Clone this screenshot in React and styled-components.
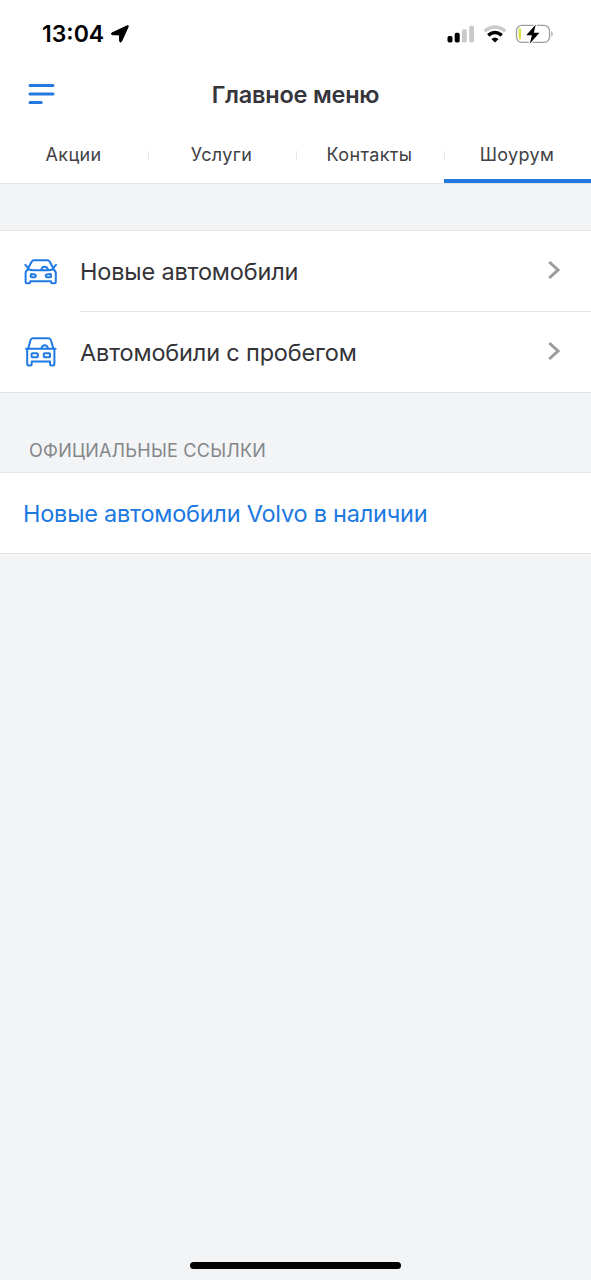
import React from "react";
import styled, { createGlobalStyle } from "styled-components";

const Global = createGlobalStyle`
  * { box-sizing: border-box; }
  body { margin: 0; background: #f2f4f6; font-family: Inter, "Liberation Sans", sans-serif; }
`;
const Screen = styled.div`
  display: flex; flex-direction: column; height: 1280px; width: 100%;
  background: #f2f4f6; color: #333338; overflow: hidden;
`;
const StatusBar = styled.header`
  display: flex; align-items: center; height: 68px; padding: 0 36px 0 42px; background: #fff;
`;
const Clock = styled.time`
  font-size: 23px; font-weight: 600; color: #000;
`;
const StatusIcons = styled.div`
  display: flex; align-items: center; margin-left: auto; height: 24px;
`;
const Drawing = styled.svg`
  display: block; flex: none; margin: ${(p) => p.$m || 0};
`;
const NavBar = styled.div`
  display: grid; grid-template-columns: 100px 1fr 100px; align-items: center;
  height: 58px; padding-bottom: 6px; background: #fff;
`;
const MenuButton = styled.button`
  border: 0; background: none; padding: 0 0 0 28px; justify-self: start;
`;
const Title = styled.h1`
  margin: 0; padding-top: 1px; text-align: center; font-size: 23.5px; line-height: 30px; font-weight: 600;
  letter-spacing: -0.22px; color: #35353b; white-space: nowrap;
`;
const Tabs = styled.nav`
  display: grid; grid-template-columns: repeat(3, 148px) 1fr; height: 58px; background: #fff;
  border-bottom: 1px solid #e2e4e6;
`;
const Tab = styled.a`
  display: flex; align-items: center; justify-content: center; position: relative;
  font-size: 18px; letter-spacing: 0.35px; padding: 3px 1px 0 0; color: #414144;
  border-bottom: 4px solid ${(p) => (p.$active ? "#2379df" : "transparent")};
  &:not(:last-child)::after {
    content: ""; position: absolute; right: -1px; top: 25px; width: 1px; height: 9px; background: #e6e8ea;
  }
`;
const List = styled.section`
  background: #fff; border-top: 1px solid #e4e6e8; border-bottom: 1px solid #e1e3e5;
  margin-top: ${(p) => p.$gap || "0"};
`;
const Row = styled.a`
  display: flex; align-items: stretch; height: ${(p) => p.$h};
`;
const RowIcon = styled.div`
  width: 80px; padding-left: 22px; display: flex; align-items: center;
`;
const RowBody = styled.div`
  flex: 1; display: flex; align-items: center; justify-content: space-between;
  padding: 1px 30px 0 0; font-size: 23.5px; letter-spacing: -0.17px;
  border-bottom: ${(p) => (p.$line ? "1px solid #e5e5e7" : "0")};
`;
const SectionLabel = styled.h2`
  margin: 0; height: 79px; padding: 47px 29px 0; font-size: 18px; line-height: 22px;
  font-weight: 400; letter-spacing: 0.24px; color: #85868a;
`;
const Link = styled.a`
  display: flex; align-items: center; height: 80px; padding: 1px 23px 0; color: #1b79df;
  font-size: 23.5px; letter-spacing: -0.23px;
`;
const Bottom = styled.footer`
  display: flex; justify-content: center; margin-top: auto; padding-bottom: 11px;
`;
const HomeIndicator = styled.div`
  width: 211px; height: 7px; border-radius: 4px; background: #000;
`;

const LocationArrow = () => (
  <Drawing width="20" height="20" viewBox="0 0 20 20" $m="0 0 0 6px">
    <path d="M1.8 9 17.2 1.8Q18.8 1.2 18.1 2.9L11.6 17.3Q10.2 19.2 9.7 17.1L9.4 10.9 2.4 10.7Q.4 10 1.8 9Z" fill="#000" stroke="#000" strokeWidth="1" strokeLinejoin="round" />
  </Drawing>
);
const Signal = () => (
  <Drawing width="28" height="20" viewBox="0 0 28 20">
    <rect x="0.5" y="12" width="5" height="6.5" rx="1.7" fill="#000" />
    <rect x="7.7" y="8.7" width="5" height="9.8" rx="1.7" fill="#000" />
    <rect x="15" y="5.3" width="4.8" height="13.2" rx="1.7" fill="#c9c9cb" />
    <rect x="22.2" y="1.8" width="4.8" height="16.7" rx="1.7" fill="#c9c9cb" />
  </Drawing>
);
const Wifi = () => (
  <Drawing width="24" height="20" viewBox="0 0 24 20" $m="0 0 0 8px">
    <path d="M1.7 7.2Q12 -1.2 22.3 7.2" fill="none" stroke="#c9c9cb" strokeWidth="3.3" />
    <path d="M5.3 11.4Q12 5.6 18.7 11.4" fill="none" stroke="#000" strokeWidth="3.6" />
    <path d="M8.4 15Q12 12 15.6 15L12 18.6Z" fill="#000" />
  </Drawing>
);
const Battery = () => (
  <Drawing width="40" height="22" viewBox="0 0 40 22" $m="0 0 0 8px">
    <rect x="1.5" y="2.4" width="33" height="17" rx="5.3" fill="#fff" stroke="#9d9d9f" strokeWidth="1.3" />
    <rect x="3.6" y="5.2" width="2.4" height="11.4" rx="1.1" fill="#dce344" />
    <path d="M36.4 8.3Q39 11 36.4 13.9Z" fill="#9d9d9f" />
    <path d="M20.8 1.6 11.2 12.2H16.9L14.8 20.7 24.4 9.7H18.8Z" fill="#000" stroke="#fff" strokeWidth="2.4" paintOrder="stroke" />
  </Drawing>
);
const MenuIcon = () => (
  <Drawing width="28" height="24" viewBox="0 0 28 24">
    <path d="M2 3.4H25M2 12H25M2 20.4H13.2" stroke="#2379df" strokeWidth="3" strokeLinecap="round" />
  </Drawing>
);
const blue = { fill: "none", stroke: "#1f7ae4", strokeWidth: 2, strokeLinecap: "round", strokeLinejoin: "round" };
const NewCar = () => (
  <Drawing width="38" height="32" viewBox="0 0 38 32" {...blue}>
    <path d="M5.8 12.8 9.8 5.6Q10.5 4.2 12 4.2H25.4Q26.9 4.2 27.6 5.6L31.6 12.8" />
    <path d="M3.4 8.8 6.6 12.6 4.2 15.2Q3.6 16 3.6 17.4V26Q3.6 27.3 4.9 27.3H7Q8.3 27.3 8.3 26V25.2H29V26Q29 27.3 30.3 27.3H32.5Q33.8 27.3 33.8 26V17.4Q33.8 16 33.2 15.2L30.8 12.6 34 8.8" />
    <path d="M6.4 13.4Q8.5 14.3 12 14.3H25.4Q28.9 14.3 31 13.4M19.2 14Q20 10.8 22.7 10.8T26 14" />
    <path d="M9.2 17.9 13 18.5Q14 18.8 13.9 20T12.8 21.2H9.8Q8.6 21.2 8.6 20ZM28.6 17.9 24.6 18.5Q23.6 18.8 23.7 20T24.8 21.2H28Q29.2 21.2 29.2 20Z" />
  </Drawing>
);
const UsedCar = () => (
  <Drawing width="38" height="36" viewBox="0 0 38 36" {...blue}>
    <path d="M6.2 14.6 8.5 6.2Q9 4.3 11 4.3H26.4Q28.4 4.3 28.9 6.2L31.4 14.6M4 14.8H33.6" />
    <path d="M5.2 15.5V29.9Q5.2 31.4 6.6 31.4H8.3Q9.7 31.4 9.7 29.9V27.4H28V29.9Q28 31.4 29.4 31.4H31Q32.4 31.4 32.4 29.9V15.5" />
    <path d="M19.4 14.4Q20.2 11.3 22.7 11.3T26 14.4" />
    <rect x="9.6" y="19.2" width="6.2" height="4" rx="0.8" />
    <rect x="21.8" y="19.2" width="6.2" height="4" rx="0.8" />
  </Drawing>
);
const Chevron = () => (
  <Drawing width="14" height="20" viewBox="0 0 14 20" $m="0 0 3px">
    <path d="M2.3 2 11 10 2.3 18" fill="none" stroke="#9b9b9d" strokeWidth="3" />
  </Drawing>
);

const tabs = [
  { name: "Акции" },
  { name: "Услуги" },
  { name: "Контакты" },
  { name: "Шоурум", active: true },
];

export default function App() {
  return (
    <Screen>
      <Global />
      <StatusBar>
        <Clock>13:04</Clock>
        <LocationArrow />
        <StatusIcons><Signal /><Wifi /><Battery /></StatusIcons>
      </StatusBar>
      <NavBar>
        <MenuButton aria-label="Меню"><MenuIcon /></MenuButton>
        <Title>Главное меню</Title>
      </NavBar>
      <Tabs>
        {tabs.map((t) => <Tab key={t.name} $active={t.active}>{t.name}</Tab>)}
      </Tabs>
      <List $gap="46px">
        <Row $h="81px">
          <RowIcon><NewCar /></RowIcon>
          <RowBody $line>Новые автомобили<Chevron /></RowBody>
        </Row>
        <Row $h="80px">
          <RowIcon><UsedCar /></RowIcon>
          <RowBody>Автомобили с пробегом<Chevron /></RowBody>
        </Row>
      </List>
      <SectionLabel>ОФИЦИАЛЬНЫЕ ССЫЛКИ</SectionLabel>
      <List>
        <Link>Новые автомобили Volvo в наличии</Link>
      </List>
      <Bottom><HomeIndicator /></Bottom>
    </Screen>
  );
}
